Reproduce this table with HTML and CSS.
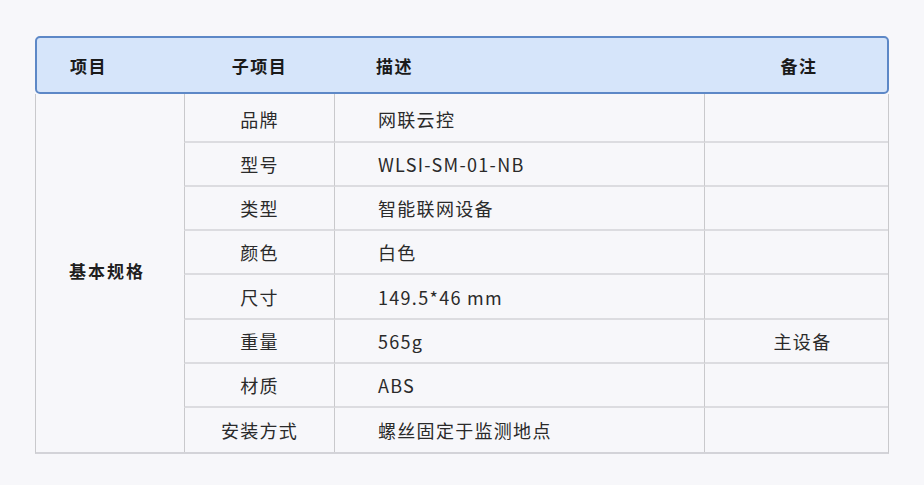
FILE: index.html
```html
<!DOCTYPE html>
<html lang="zh">
<head>
<meta charset="utf-8">
<link rel="stylesheet" href="styles.css">
</head>
<body>
<div class="wrap">
  <div class="head">
    <div class="h h-left">项目</div>
    <div class="h h-center h-sub">子项目</div>
    <div class="h h-desc">描述</div>
    <div class="h h-center">备注</div>
  </div>
  <div class="body">
    <div class="group">基本规格</div>
    <div class="c sub first">品牌</div><div class="c desc first">网联云控</div><div class="c note first"></div>
    <div class="c sub">型号</div><div class="c desc">WLSI-SM-01-NB</div><div class="c note"></div>
    <div class="c sub">类型</div><div class="c desc">智能联网设备</div><div class="c note"></div>
    <div class="c sub">颜色</div><div class="c desc">白色</div><div class="c note"></div>
    <div class="c sub">尺寸</div><div class="c desc">149.5*46 mm</div><div class="c note"></div>
    <div class="c sub">重量</div><div class="c desc">565g</div><div class="c note">主设备</div>
    <div class="c sub">材质</div><div class="c desc">ABS</div><div class="c note"></div>
    <div class="c sub last">安装方式</div><div class="c desc last">螺丝固定于监测地点</div><div class="c note last"></div>
  </div>
</div>
</body>
</html>
```
FILE: styles.css
```css
html, body {
  margin: 0;
  padding: 0;
  background: #f7f7fa;
}
body {
  font-family: "Noto Sans CJK SC", "Noto Sans", sans-serif;
  color: #2a2a2a;
}
.wrap {
  width: 854px;
  margin: 36px 0 0 35px;
}
.head {
  display: grid;
  grid-template-columns: 149px 150px 370px 185px;
  height: 58px;
  box-sizing: border-box;
  border: 2px solid #5d88c7;
  border-radius: 5px;
  background: #d6e5fa;
  align-items: center;
}
.h {
  font-size: 17px;
  font-weight: 700;
  color: #1a1a1a;
  letter-spacing: 1.5px;
}
.h-left { padding-left: 33px; }
.h-center { text-align: center; padding-left: 1px; }
.h-sub { padding-left: 0; padding-right: 3px; }
.h-desc { padding-left: 40px; }
.body {
  display: grid;
  grid-template-columns: 148px 150px 370px 184px;
  grid-template-rows: 49px 44px 44px 44px 45px 44px 44px 44px;
  border-left: 1px solid #c9c9cc;
  border-right: 1px solid #c9c9cc;
  border-bottom: 2px solid #d3d3d8;
  box-sizing: border-box;
}
.group {
  grid-row: 1 / span 8;
  display: flex;
  align-items: center;
  justify-content: center;
  font-size: 17px;
  font-weight: 700;
  color: #1f1f1f;
  letter-spacing: 2px;
  padding-right: 6px;
  padding-bottom: 6px;
}
.c {
  display: flex;
  align-items: center;
  font-size: 18px;
  letter-spacing: 1.3px;
  border-left: 1px solid #c9c9cc;
  border-bottom: 2px solid #dcdce0;
  box-sizing: border-box;
}
.c.first { padding-top: 3px; }
.c.last { border-bottom: none; }
.sub, .note { justify-content: center; }
.note { padding-left: 12px; }
.desc { padding-left: 43px; }
```
